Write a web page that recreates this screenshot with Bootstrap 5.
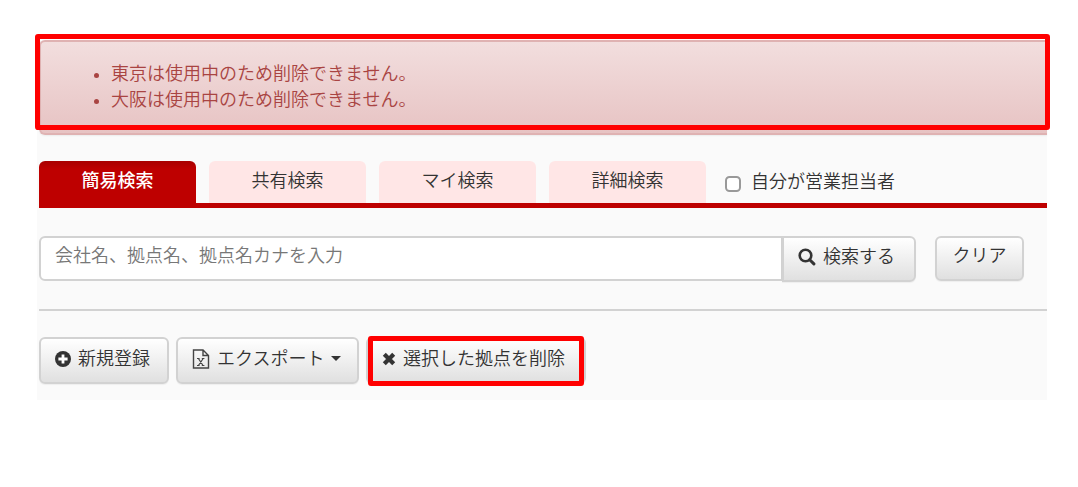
<!DOCTYPE html>
<html lang="ja">
<head>
<meta charset="utf-8">
<meta name="viewport" content="width=device-width, initial-scale=1">
<title>拠点検索</title>
<link href="https://cdn.jsdelivr.net/npm/bootstrap@5.3.0/dist/css/bootstrap.min.css" rel="stylesheet">
<style>
  body { font-family: "Liberation Sans", "Noto Sans CJK JP", sans-serif; font-size: 18px; font-weight: 350; line-height: 26px; color: #333; background: #fff; }
  .site-panel { margin: 40px 31px 0 37px; padding: 0 0 16px 2px; background: #fafafa; }
  .marked { position: relative; }
  .marked::after { content: ""; position: absolute; border: 5px solid #f00; border-radius: 3px; pointer-events: none; }
  .error-box { padding: 19px 24px 20px 24px; margin-bottom: 26px; border: 2px solid #dfb2b2; border-right: 0; border-radius: 6px 0 0 6px; background: linear-gradient(#f2dede, #e7c3c3); color: #a94442; box-shadow: 0 1px 2px rgba(0,0,0,.06); }
  .error-box::after { inset: -8px -3px 3px -6px; }
  .error-box ul { padding-left: 46px; }
  .search-tabs { gap: 13px; border-bottom: 5px solid #be0000; }
  .search-tabs .nav-link { width: 157px; height: 42px; padding: 7px 0; border-radius: 6px 6px 0 0; background: #ffe6e6; color: #333; text-align: center; }
  .search-tabs .nav-link.active { background: linear-gradient(#a80000, #be0000 8px); color: #fff; font-weight: 500; }
  .owner-check { gap: 10px; margin-left: 6px; }
  .owner-check input { width: 16px; height: 16px; margin: 4px 0 0; border: 2px solid #999; border-radius: 4px; }
  .search-row { gap: 19px; padding: 28px 23px 27px 0; }
  .search-row .form-control { height: 45px; padding: 0 14px 4px; border: 2px solid #d2d2d2; border-radius: 6px; font-size: 18px; font-weight: 350; color: #333; }
  .search-row .form-control::placeholder { color: #777; }
  .tool-btn { display: inline-flex; align-items: center; gap: 7px; height: 47px; padding: 0 14px 4px; border: 2px solid #d2d2d2; border-radius: 6px; background: linear-gradient(#fff, #e0e0e0); color: #333; font-size: 18px; font-weight: 350; line-height: 26px; white-space: nowrap; box-shadow: 0 1px 1px rgba(0,0,0,.05); }
  .tool-btn.search-btn { width: 134px; height: 46px; }
  .tool-btn.clear-btn { width: 89px; height: 45px; padding-bottom: 6px; }
  .tool-bar { gap: 7px; padding-top: 26px; border-top: 2px solid #d2d2d2; }
  .new-btn { width: 130px; }
  .export-btn { width: 183px; }
  .delete-btn { width: 220px; }
  .delete-btn::after { inset: -3px 0 -4px 0; }
  .caret { border: 5px solid transparent; border-top-color: #333; border-bottom: 0; }
</style>
</head>
<body>
<main class="site-panel">
  <div class="error-box marked" role="alert">
    <ul class="mb-0">
      <li>東京は使用中のため削除できません。</li>
      <li>大阪は使用中のため削除できません。</li>
    </ul>
  </div>

  <nav class="search-tabs nav flex-nowrap align-items-start">
    <a class="nav-link active flex-shrink-0" href="#" aria-current="page">簡易検索</a>
    <a class="nav-link flex-shrink-0" href="#">共有検索</a>
    <a class="nav-link flex-shrink-0" href="#">マイ検索</a>
    <a class="nav-link flex-shrink-0" href="#">詳細検索</a>
    <div class="owner-check d-flex align-items-center align-self-center">
      <input class="form-check-input" type="checkbox" id="owner">
      <label for="owner">自分が営業担当者</label>
    </div>
  </nav>

  <form class="search-row d-flex align-items-start">
    <div class="input-group flex-nowrap align-items-start">
      <input class="form-control" type="text" placeholder="会社名、拠点名、拠点名カナを入力" aria-label="会社名、拠点名、拠点名カナ">
      <button class="btn tool-btn search-btn flex-shrink-0" type="button">
        <svg width="18" height="18" viewBox="0 0 18 18" fill="none" stroke="#333" aria-hidden="true"><circle cx="7.5" cy="7.5" r="5.8" stroke-width="2.6"/><path d="M11.7 11.7l4.2 4.2" stroke-width="3" stroke-linecap="round"/></svg>検索する</button>
    </div>
    <button class="btn tool-btn clear-btn justify-content-center flex-shrink-0" type="reset">クリア</button>
  </form>

  <div class="tool-bar d-flex">
    <button class="btn tool-btn new-btn" type="button">
      <svg width="16" height="16" viewBox="0 0 16 16" aria-hidden="true"><circle cx="8" cy="8" r="8" fill="#333"/><path d="M8 3.4v9.2M3.4 8h9.2" stroke="#fff" stroke-width="2.8"/></svg>新規登録</button>
    <button class="btn tool-btn export-btn" type="button" aria-haspopup="true">
      <svg width="18" height="20" viewBox="0 0 18 20" fill="none" stroke="#444" stroke-width="1.4" aria-hidden="true"><path d="M1.5 1h9.5L16.5 6.5V19h-15zM11 1v5.5h5.5"/><path d="M6.4 9.5l4.6 7M11.2 9.5l-4.8 7M5 9.5h2.6M9.8 9.5h2.6M5 16.5h2.6M9.8 16.5h2.6" stroke-width="1.2"/></svg>エクスポート<span class="caret"></span></button>
    <button class="btn tool-btn delete-btn marked" type="button">
      <svg width="14" height="14" viewBox="0 0 14 14" aria-hidden="true"><path d="M2.3 2.3l9.4 9.4M11.7 2.3l-9.4 9.4" stroke="#333" stroke-width="4.2"/></svg>選択した拠点を削除</button>
  </div>
</main>
<script src="https://cdn.jsdelivr.net/npm/bootstrap@5.3.0/dist/js/bootstrap.bundle.min.js"></script>
</body>
</html>
